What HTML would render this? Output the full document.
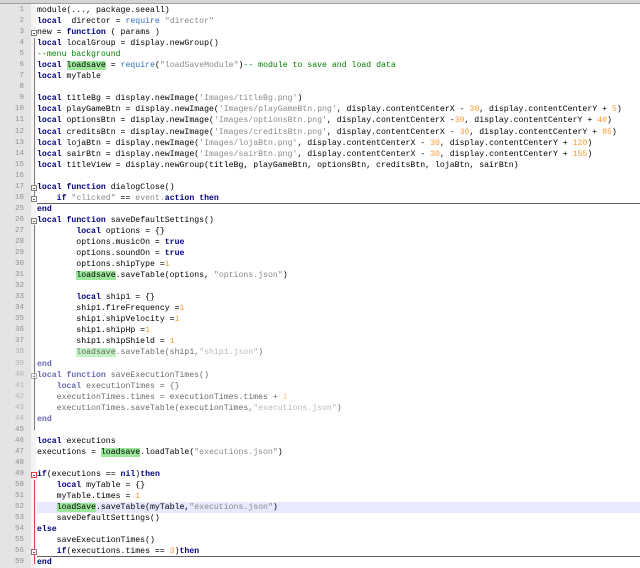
<!DOCTYPE html>
<html><head><meta charset="utf-8"><style>
html,body{margin:0;padding:0;width:640px;height:568px;overflow:hidden;background:#fff}
.top{position:absolute;left:0;top:0;width:640px;height:3px;background:#d4d4d4;border-bottom:1px solid #a0a0a0}
.gut{position:absolute;left:0;top:4px;width:31px;height:564px;background:#e4e4e4}
.fold{position:absolute;left:31px;top:4px;width:5px;height:564px;background:#f4f4f4}
.code{position:absolute;left:0;top:5px;width:640px;font-family:"Liberation Mono",monospace;font-size:8.2px}
.r{height:11.05px;line-height:11.05px;position:relative;white-space:pre;box-sizing:border-box}
.n{position:absolute;left:0;width:24px;text-align:right;color:#909090;font-size:7.5px}
.t{position:absolute;left:37px;color:#000}
.k{color:#00007f;font-weight:bold}
.s{color:#8a8a8a}
.d{color:#ff9a30}
.c{color:#008000}
.f{color:#3070c0}
.h{background:#9be89b}
.cur{background:#e8e8ff}
.ul{border-bottom:1px solid #606060}
.bx{position:absolute;left:31px;top:3px;width:6px;height:6px;border:1px solid #808080;box-sizing:border-box;background:#fff}
.bx:after{content:"";position:absolute;left:1px;top:2px;width:2px;height:0;border-top:1px solid #606060}
.rb{border-color:#e04040}
.vl{position:absolute;left:34px;width:1px;background:#808080}
</style></head><body>
<div class="top"></div>
<div class="gut"></div>
<div class="fold"></div>
<div class="vl" style="top:38px;height:160px"></div>
<div class="vl" style="top:225px;height:178px"></div>
<div class="vl" style="top:380px;height:50px"></div>
<div class="vl" style="top:480px;height:84px;background:#e04040"></div>
<div class="code">
<div class="r"><span class="n">1</span><span class="t">module(..., package.seeall)</span></div>
<div class="r"><span class="n">2</span><span class="t"><span class="k">local</span>  director = <span class="f">require</span> <span class="s">"director"</span></span></div>
<div class="r"><span class="n">3</span><span class="bx"></span><span class="t">new = <span class="k">function</span> ( params )</span></div>
<div class="r"><span class="n">4</span><span class="t"><span class="k">local</span> localGroup = display.newGroup()</span></div>
<div class="r"><span class="n">5</span><span class="t"><span class="c">--menu background</span></span></div>
<div class="r"><span class="n">6</span><span class="t"><span class="k">local</span> <span class="h">loadsave</span> = <span class="f">require</span>(<span class="s">"loadSaveModule"</span>)<span class="c">-- module to save and load data</span></span></div>
<div class="r"><span class="n">7</span><span class="t"><span class="k">local</span> myTable</span></div>
<div class="r"><span class="n">8</span></div>
<div class="r"><span class="n">9</span><span class="t"><span class="k">local</span> titleBg = display.newImage(<span class="s">'Images/titleBg.png'</span>)</span></div>
<div class="r"><span class="n">10</span><span class="t"><span class="k">local</span> playGameBtn = display.newImage(<span class="s">'Images/playGameBtn.png'</span>, display.contentCenterX - <span class="d">30</span>, display.contentCenterY + <span class="d">5</span>)</span></div>
<div class="r"><span class="n">11</span><span class="t"><span class="k">local</span> optionsBtn = display.newImage(<span class="s">'Images/optionsBtn.png'</span>, display.contentCenterX -<span class="d">30</span>, display.contentCenterY + <span class="d">40</span>)</span></div>
<div class="r"><span class="n">12</span><span class="t"><span class="k">local</span> creditsBtn = display.newImage(<span class="s">'Images/creditsBtn.png'</span>, display.contentCenterX - <span class="d">30</span>, display.contentCenterY + <span class="d">85</span>)</span></div>
<div class="r"><span class="n">13</span><span class="t"><span class="k">local</span> lojaBtn = display.newImage(<span class="s">'Images/lojaBtn.png'</span>, display.contentCenterX - <span class="d">30</span>, display.contentCenterY + <span class="d">120</span>)</span></div>
<div class="r"><span class="n">14</span><span class="t"><span class="k">local</span> sairBtn = display.newImage(<span class="s">'Images/sairBtn.png'</span>, display.contentCenterX - <span class="d">30</span>, display.contentCenterY + <span class="d">155</span>)</span></div>
<div class="r"><span class="n">15</span><span class="t"><span class="k">local</span> titleView = display.newGroup(titleBg, playGameBtn, optionsBtn, creditsBtn, lojaBtn, sairBtn)</span></div>
<div class="r"><span class="n">16</span></div>
<div class="r"><span class="n">17</span><span class="bx"></span><span class="t"><span class="k">local</span> <span class="k">function</span> dialogClose()</span></div>
<div class="r ul" style="margin-left:37px"><span class="n" style="left:-37px">18</span><span class="bx" style="left:-6px"></span><span class="t" style="left:0">    <span class="k">if</span> <span class="s">"clicked"</span> == <span class="s">event.</span><span class="k">action</span> <span class="k">then</span></span></div>
<div class="r"><span class="n">25</span><span class="t"><span class="k">end</span></span></div>
<div class="r"><span class="n">26</span><span class="bx"></span><span class="t"><span class="k">local</span> <span class="k">function</span> saveDefaultSettings()</span></div>
<div class="r"><span class="n">27</span><span class="t">        <span class="k">local</span> options = {}</span></div>
<div class="r"><span class="n">28</span><span class="t">        options.musicOn = <span class="k">true</span></span></div>
<div class="r"><span class="n">29</span><span class="t">        options.soundOn = <span class="k">true</span></span></div>
<div class="r"><span class="n">30</span><span class="t">        options.shipType =<span class="d">1</span></span></div>
<div class="r"><span class="n">31</span><span class="t">        <span class="h">loadsave</span>.saveTable(options, <span class="s">"options.json"</span>)</span></div>
<div class="r"><span class="n">32</span></div>
<div class="r"><span class="n">33</span><span class="t">        <span class="k">local</span> ship1 = {}</span></div>
<div class="r"><span class="n">34</span><span class="t">        ship1.fireFrequency =<span class="d">1</span></span></div>
<div class="r"><span class="n">35</span><span class="t">        ship1.shipVelocity =<span class="d">1</span></span></div>
<div class="r"><span class="n">36</span><span class="t">        ship1.shipHp =<span class="d">1</span></span></div>
<div class="r"><span class="n">37</span><span class="t">        ship1.shipShield = <span class="d">1</span></span></div>
<div class="r" style="opacity:.6"><span class="n">38</span><span class="t">        <span class="h">loadsave</span>.saveTable(ship1,<span class="s">"ship1.json"</span>)</span></div>
<div class="r" style="opacity:.6"><span class="n">39</span><span class="t"><span class="k">end</span></span></div>
<div class="r" style="opacity:.6"><span class="n">40</span><span class="bx"></span><span class="t"><span class="k">local</span> <span class="k">function</span> saveExecutionTimes()</span></div>
<div class="r" style="opacity:.6"><span class="n">41</span><span class="t">    <span class="k">local</span> executionTimes = {}</span></div>
<div class="r" style="opacity:.6"><span class="n">42</span><span class="t">    executionTimes.times = executionTimes.times + <span class="d">1</span></span></div>
<div class="r" style="opacity:.6"><span class="n">43</span><span class="t">    executionTimes.saveTable(executionTimes,<span class="s">"executions.json"</span>)</span></div>
<div class="r" style="opacity:.6"><span class="n">44</span><span class="t"><span class="k">end</span></span></div>
<div class="r"><span class="n">45</span></div>
<div class="r"><span class="n">46</span><span class="t"><span class="k">local</span> executions</span></div>
<div class="r"><span class="n">47</span><span class="t">executions = <span class="h">loadsave</span>.loadTable(<span class="s">"executions.json"</span>)</span></div>
<div class="r"><span class="n">48</span></div>
<div class="r"><span class="n">49</span><span class="bx rb"></span><span class="t"><span class="k">if</span>(executions == <span class="k">nil</span>)<span class="k">then</span></span></div>
<div class="r"><span class="n">50</span><span class="t">    <span class="k">local</span> myTable = {}</span></div>
<div class="r"><span class="n">51</span><span class="t">    myTable.times = <span class="d">1</span></span></div>
<div class="r"><span class="n">52</span><span class="t cur" style="right:0">    <span class="h">loadSave</span>.saveTable(myTable,<span class="s">"executions.json"</span>)</span></div>
<div class="r"><span class="n">53</span><span class="t">    saveDefaultSettings()</span></div>
<div class="r"><span class="n">54</span><span class="t"><span class="k">else</span></span></div>
<div class="r"><span class="n">55</span><span class="t">    saveExecutionTimes()</span></div>
<div class="r ul" style="margin-left:37px"><span class="n" style="left:-37px">56</span><span class="bx" style="left:-6px"></span><span class="t" style="left:0">    <span class="k">if</span>(executions.times == <span class="d">3</span>)<span class="k">then</span></span></div>
<div class="r"><span class="n">59</span><span class="t"><span class="k">end</span></span></div>
</div>
</body></html>
